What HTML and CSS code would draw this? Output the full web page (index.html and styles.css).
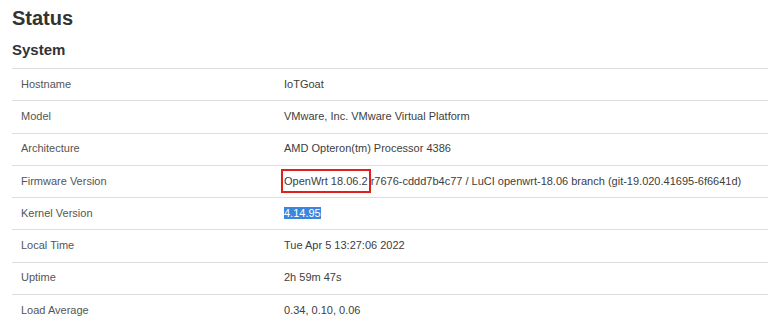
FILE: index.html
```html
<!DOCTYPE html>
<html>
<head>
<meta charset="utf-8">
<link rel="stylesheet" href="styles.css">
</head>
<body>
<div class="page">
  <h1 class="title">Status</h1>
  <h2 class="section">System</h2>
  <div class="table">
    <div class="row"><div class="label">Hostname</div><div class="value">IoTGoat</div></div>
    <div class="row"><div class="label">Model</div><div class="value">VMware, Inc. VMware Virtual Platform</div></div>
    <div class="row"><div class="label">Architecture</div><div class="value">AMD Opteron(tm) Processor 4386</div></div>
    <div class="row"><div class="label">Firmware Version</div><div class="value"><span class="mark">OpenWrt 18.06.2</span> r7676-cddd7b4c77 / LuCI openwrt-18.06 branch (git-19.020.41695-6f6641d)</div></div>
    <div class="row"><div class="label">Kernel Version</div><div class="value"><span class="sel">4.14.95</span></div></div>
    <div class="row"><div class="label">Local Time</div><div class="value">Tue Apr 5 13:27:06 2022</div></div>
    <div class="row"><div class="label">Uptime</div><div class="value">2h 59m 47s</div></div>
    <div class="row"><div class="label">Load Average</div><div class="value">0.34, 0.10, 0.06</div></div>
  </div>
</div>
</body>
</html>
```
FILE: styles.css
```css
html, body {
  margin: 0;
  padding: 0;
  background: #fff;
  overflow: hidden;
}
.page {
  font-family: "Liberation Sans", Arial, sans-serif;
  padding: 7px 0 0 12px;
}
.title {
  margin: 0;
  font-size: 20px;
  line-height: 23px;
  font-weight: bold;
  color: #333;
}
.section {
  margin: 11px 0 10px 0;
  font-size: 15px;
  line-height: 17px;
  font-weight: bold;
  color: #333;
}
.table {
  display: flex;
  flex-direction: column;
}
.row {
  display: grid;
  grid-template-columns: 263px 1fr;
  height: 32.3px;
  box-sizing: border-box;
  border-top: 1px solid #ddd;
  align-items: center;
  font-size: 11px;
  line-height: 13px;
  padding-bottom: 1px;
}
.label {
  padding-left: 9px;
  color: #555;
}
.value {
  padding-left: 9px;
  color: #404040;
  white-space: nowrap;
}
.mark {
  outline: 2px solid #e0201c;
  outline-offset: 1px;
  padding: 3px 0;
}
.sel {
  background: #3b86dc;
  color: #fff;
}
```
